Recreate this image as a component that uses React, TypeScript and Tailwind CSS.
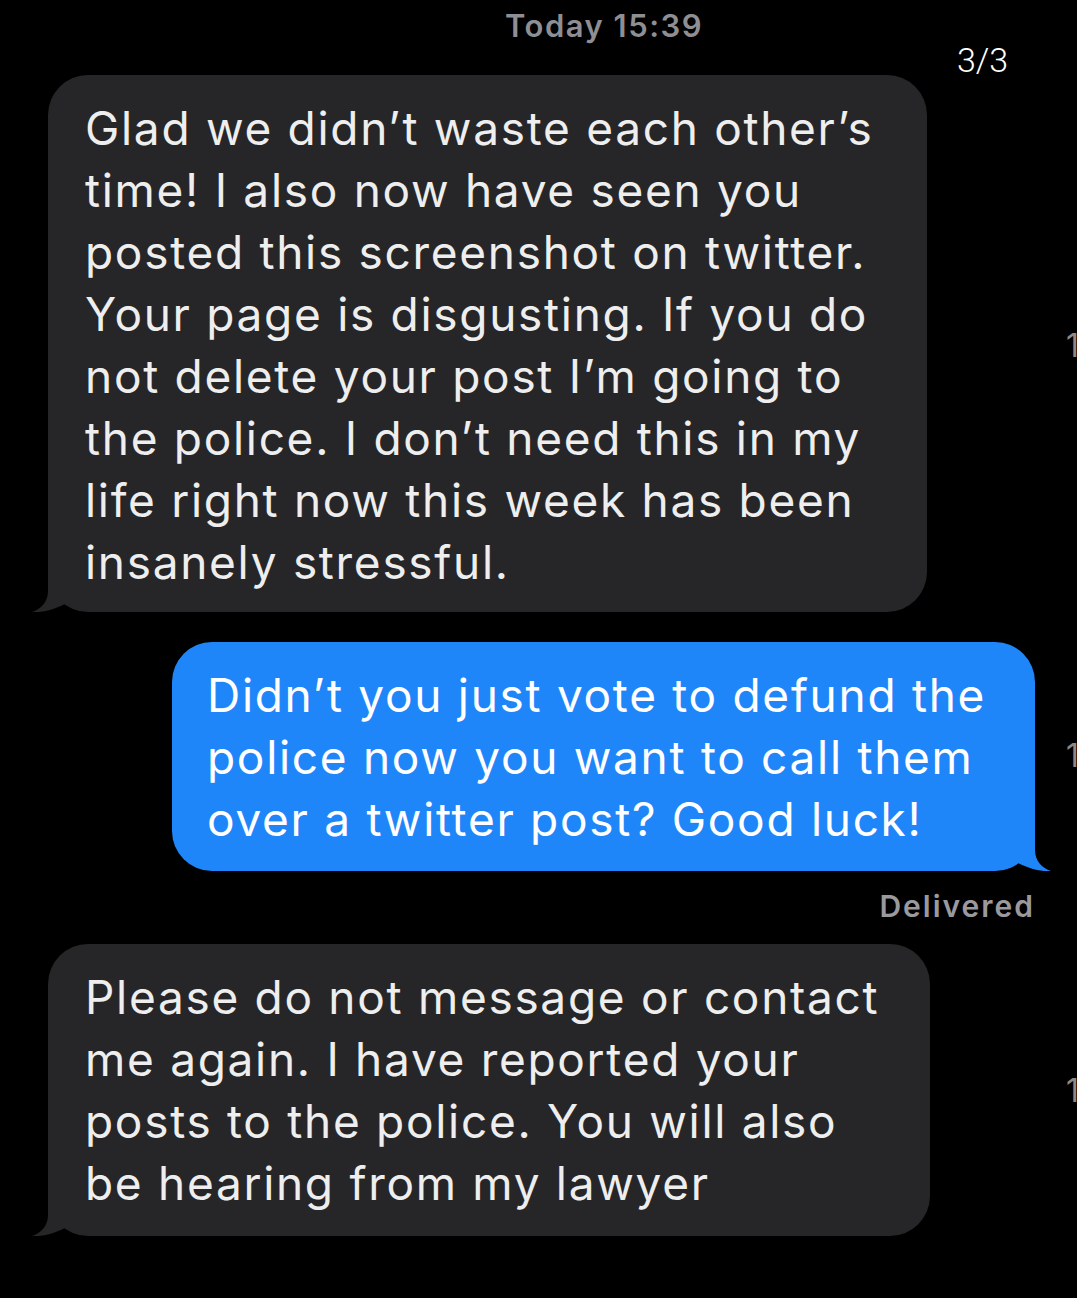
function Tail({ color, flip }: { color: string; flip?: boolean }) {
  return (
    <svg
      viewBox="0 0 70 45"
      className={
        flip
          ? "absolute right-[-17px] bottom-0 w-[70px] h-[45px] -scale-x-100"
          : "absolute left-[-17px] bottom-0 w-[70px] h-[45px]"
      }
    >
      <path
        d="M17,0 L17,24 C17,35 10,42 1,45 C12,46 24,42 34,37 C42,42 52,45 70,45 L70,0 Z"
        fill={color}
      />
    </svg>
  );
}

function Bubble({
  lines,
  side,
  className,
}: {
  lines: string[];
  side: "in" | "out";
  className: string;
}) {
  const out = side === "out";
  return (
    <div
      className={
        "relative flex flex-col rounded-[40px] pt-[22px] " +
        (out ? "bg-[#1f86fa] text-white " : "bg-[#262628] text-[#eeeeee] ") +
        className
      }
    >
      {lines.map((l, i) => (
        <div key={i} className="relative z-10 whitespace-nowrap text-[46px] leading-[62px] tracking-[1.7px]">
          {l}
        </div>
      ))}
      <Tail color={out ? "#1f86fa" : "#262628"} flip={out} />
    </div>
  );
}

export default function App() {
  return (
    <div
      className="relative w-[1077px] h-[1298px] overflow-hidden bg-black"
      style={{ fontFamily: "Inter, 'Liberation Sans', sans-serif" }}
    >
      <div className="flex flex-col items-start pl-[48px] pr-[42px]">
        <div className="h-[75px] pt-[6px] pl-[457px]">
          <span className="text-[31px] leading-[40px] font-semibold tracking-[1.5px] text-[#8e8e93]">Today 15:39</span>
        </div>

        <Bubble
          side="in"
          className="w-[879px] pl-[37px] pb-[19px]"
          lines={[
            "Glad we didn’t waste each other’s",
            "time! I also now have seen you",
            "posted this screenshot on twitter.",
            "Your page is disgusting. If you do",
            "not delete your post I’m going to",
            "the police. I don’t need this in my",
            "life right now this week has been",
            "insanely stressful.",
          ]}
        />

        <Bubble
          side="out"
          className="mt-[30px] self-end w-[863px] pl-[35px] pb-[21px]"
          lines={[
            "Didn’t you just vote to defund the",
            "police now you want to call them",
            "over a twitter post? Good luck!",
          ]}
        />

        <div className="mt-[17px] self-end text-[30px] leading-[36px] font-semibold tracking-[2px] text-[#9a9a9e]">
          Delivered
        </div>

        <Bubble
          side="in"
          className="mt-[20px] w-[882px] pl-[37px] pb-[22px]"
          lines={[
            "Please do not message or contact",
            "me again. I have reported your",
            "posts to the police. You will also",
            "be hearing from my lawyer",
          ]}
        />
      </div>

      {/* story counter overlay */}
      <div className="absolute left-[957px] top-[40px] text-[34px] leading-[40px] text-white font-light" style={{ fontFamily: "Roboto, sans-serif" }}>
        3/3
      </div>

      {/* cut-off counters at the right edge */}
      <div className="absolute left-[1066px] top-[326px] text-[32px] leading-[40px] text-[#8a8a8a]">1</div>
      <div className="absolute left-[1066px] top-[736px] text-[32px] leading-[40px] text-[#8a8a8a]">1</div>
      <div className="absolute left-[1066px] top-[1071px] text-[32px] leading-[40px] text-[#8a8a8a]">1</div>
    </div>
  );
}
